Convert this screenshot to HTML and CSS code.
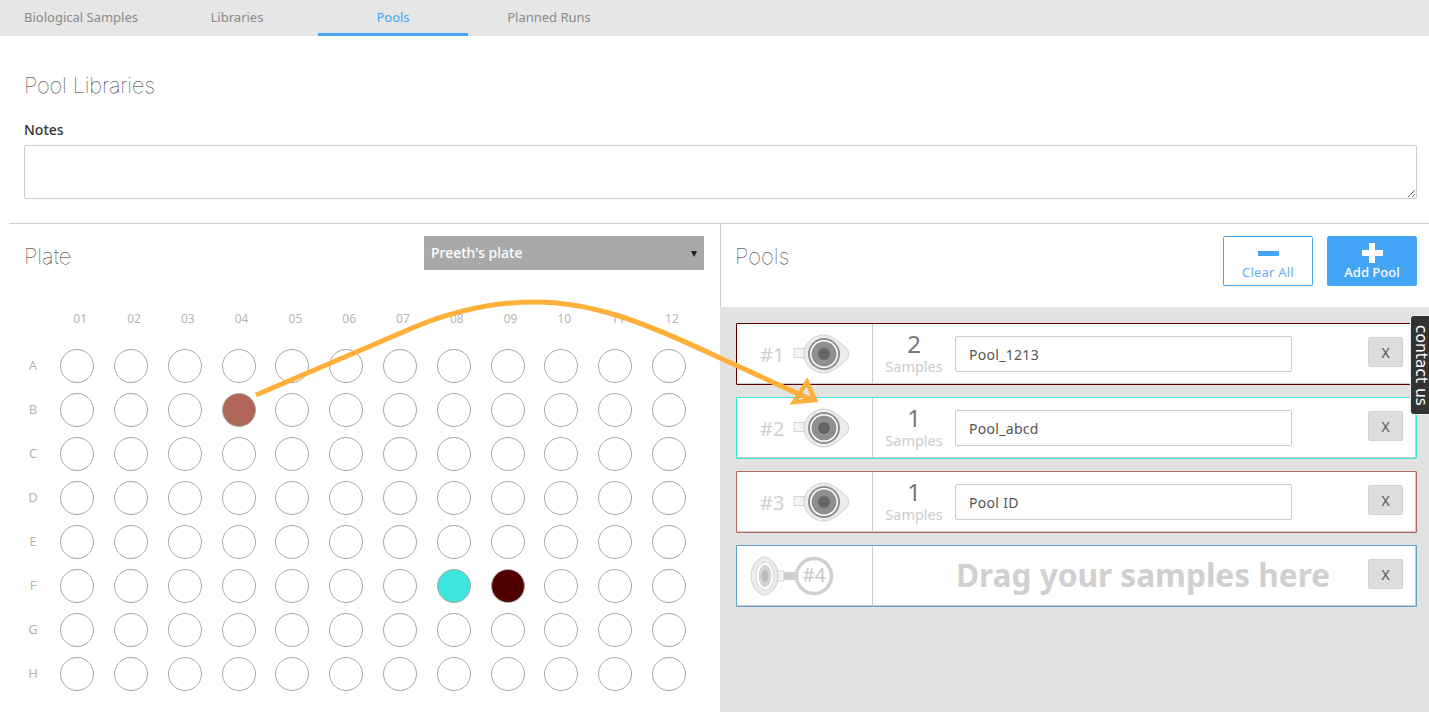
FILE: index.html
```html
<!DOCTYPE html>
<html>
    <head>
        <meta charset="utf-8">
        <title>Pool Libraries</title>
        <link rel="stylesheet" href="styles.css">
    </head>
    <body>
        <svg width="0" height="0" class="defs">
            <symbol id="valve" viewBox="0 0 56 40">
                <path d="M1 14.500h11v9h-11z" fill="#f4f4f4" stroke="#d4d4d4"/>
                <path d="M31 1c-10 0-20 8-20 19s10 19 20 19c8 0 17-8 23-14 2-2.500 2-7.500 0-10-6-6-15-14-23-14z" fill="#ececec" stroke="#d0d0d0"/>
                <circle cx="31" cy="20" r="16" fill="#8d8d8d"/>
                <circle cx="31" cy="20" r="14" fill="#fff"/>
                <circle cx="31" cy="20" r="12.500" fill="#8f8f8f"/>
                <circle cx="31" cy="20" r="6" fill="#666"/>
            </symbol>
        </svg>

        <ul class="tabs">
            <li>Biological Samples</li>
            <li>Libraries</li>
            <li class="active">Pools</li>
            <li>Planned Runs</li>
        </ul>

        <div class="intro">
            <h1>Pool Libraries</h1>
            <label class="notes-label">Notes</label>
            <textarea class="notes"></textarea>
        </div>

        <div class="workspace">
            <div class="plate-pane">
                <div class="pane-head">
                    <h2>Plate</h2>
                    <div class="plate-select">Preeth's plate<span class="caret">▾</span></div>
                </div>
                <div class="plate">
                    <span></span>
                    <span class="col">01</span><span class="col">02</span><span class="col">03</span><span class="col">04</span><span class="col">05</span><span class="col">06</span><span class="col">07</span><span class="col">08</span><span class="col">09</span><span class="col">10</span><span class="col">11</span><span class="col">12</span>

                    <span class="row">A</span>
                    <i></i><i></i><i></i><i></i><i></i><i></i><i></i><i></i><i></i><i></i><i></i><i></i>
                    <span class="row">B</span>
                    <i></i><i></i><i></i><i class="brick"></i><i></i><i></i><i></i><i></i><i></i><i></i><i></i><i></i>
                    <span class="row">C</span>
                    <i></i><i></i><i></i><i></i><i></i><i></i><i></i><i></i><i></i><i></i><i></i><i></i>
                    <span class="row">D</span>
                    <i></i><i></i><i></i><i></i><i></i><i></i><i></i><i></i><i></i><i></i><i></i><i></i>
                    <span class="row">E</span>
                    <i></i><i></i><i></i><i></i><i></i><i></i><i></i><i></i><i></i><i></i><i></i><i></i>
                    <span class="row">F</span>
                    <i></i><i></i><i></i><i></i><i></i><i></i><i></i><i class="aqua"></i><i class="maroon"></i><i></i><i></i><i></i>
                    <span class="row">G</span>
                    <i></i><i></i><i></i><i></i><i></i><i></i><i></i><i></i><i></i><i></i><i></i><i></i>
                    <span class="row">H</span>
                    <i></i><i></i><i></i><i></i><i></i><i></i><i></i><i></i><i></i><i></i><i></i><i></i>
                </div>
            </div>

            <div class="pools-pane">
                <div class="pane-head pools-head">
                    <h2>Pools</h2>
                    <div class="actions">
                        <button class="btn btn-clear"><b class="minus"></b>Clear All</button>
                        <button class="btn btn-add"><b class="plus"></b>Add Pool</button>
                    </div>
                </div>
                <div class="pool-list">
                    <div class="pool pool-1">
                        <div class="pool-id"><span class="num">#1</span><svg class="valve"><use href="#valve"/></svg></div>
                        <div class="count"><strong>2</strong><span>Samples</span></div>
                        <input class="pool-name" value="Pool_1213">
                        <button class="remove">X</button>
                    </div>
                    <div class="pool pool-2">
                        <div class="pool-id"><span class="num">#2</span><svg class="valve"><use href="#valve"/></svg></div>
                        <div class="count"><strong>1</strong><span>Samples</span></div>
                        <input class="pool-name" value="Pool_abcd">
                        <button class="remove">X</button>
                    </div>
                    <div class="pool pool-3">
                        <div class="pool-id"><span class="num">#3</span><svg class="valve"><use href="#valve"/></svg></div>
                        <div class="count"><strong>1</strong><span>Samples</span></div>
                        <input class="pool-name" value="Pool ID">
                        <button class="remove">X</button>
                    </div>
                    <div class="pool pool-4">
                        <div class="pool-id empty">
                            <svg class="valve-empty" viewBox="0 0 86 42" width="86" height="42">
                                <path d="M26 16h8v10h-8z" fill="#f4f4f4" stroke="#d4d4d4"/>
                                <path d="M34 17h12v8h-12z" fill="#cfcfcf"/>
                                <path d="M14 2c-6 0-13 10-13 19s7 19 13 19c8 0 14-9 14-19s-6-19-14-19z" fill="#ececec" stroke="#d0d0d0"/>
                                <ellipse cx="15" cy="21" rx="9" ry="14" fill="#fff" stroke="#d4d4d4"/>
                                <ellipse cx="15" cy="21" rx="6.500" ry="11" fill="#d4d4d4"/>
                                <ellipse cx="15" cy="21" rx="3.500" ry="6" fill="#bdbdbd"/>
                                <circle cx="64" cy="21" r="17.500" fill="#fff" stroke="#cfcfcf" stroke-width="3.500"/>
                                <text x="64" y="27" text-anchor="middle" class="valve-num">#4</text>
                            </svg>
                        </div>
                        <div class="drop">Drag your samples here</div>
                        <button class="remove">X</button>
                    </div>
                </div>
            </div>
        </div>

        <svg class="arrow" width="1429" height="712" viewBox="0 0 1429 712">
            <path d="M256 395L410 329C445 314 490 302 535 302C590 302 640 320 720 358L812 400" fill="none" stroke="#ffb03b" stroke-width="5"/>
            <path d="M807 382L794 402L815 400Z" fill="none" stroke="#ffb03b" stroke-width="4.500"/>
        </svg>

        <div class="contact"><span>contact us</span></div>
    </body>
</html>
```

FILE: styles.css
```css
*{
    margin: 0;
    padding: 0;
    box-sizing: border-box;
}
html,body{
    height: 100%;
    overflow: hidden;
}
body{
    display: flex;
    flex-direction: column;
    background-color: #fff;
    font-family: "Noto Sans", "Open Sans", sans-serif;
    color: #777;
    position: relative;
}
.defs{
    position: absolute;
}

/* tabs */
.tabs{
    list-style: none;
    display: flex;
    gap: 6px;
    height: 36px;
    padding-left: 6px;
    background-color: #e6e6e6;
}
.tabs li{
    width: 150px;
    line-height: 35px;
    text-align: center;
    font-size: 13px;
    color: #8a8a8a;
}
.tabs .active{
    color: #42a5f5;
    border-bottom: 3px solid #42a5f5;
}

/* title and notes */
.intro{
    padding: 34px 12px 24px 24px;
}
h1,h2{
    font-family: Inter, Lato, sans-serif;
    font-weight: 100;
    color: #222;
}
h1{
    font-size: 22px;
    line-height: 30px;
    letter-spacing: -0.2px;
}
.notes-label{
    display: block;
    margin-top: 20px;
    font-size: 14px;
    line-height: 20px;
    font-weight: 500;
    color: #333;
}
.notes{
    display: block;
    width: 100%;
    height: 54px;
    margin-top: 5px;
    border: 1px solid #ccc;
    border-radius: 2px;
}

/* lower part */
.workspace{
    flex: 1;
    display: flex;
    margin-left: 9px;
    border-top: 1px solid #ccc;
}
.plate-pane{
    width: 711px;
}
.pane-head{
    height: 83px;
    padding: 12px 16px 0 15px;
    display: flex;
    justify-content: space-between;
    align-items: flex-start;
}
h2{
    font-size: 22px;
    line-height: 40px;
}
.plate-select{
    width: 280px;
    height: 34px;
    padding: 0 7px;
    display: flex;
    justify-content: space-between;
    background-color: #a9a9a9;
    color: #fff;
    font-size: 14px;
    font-weight: 500;
    line-height: 34px;
}
.caret{
    color: #222;
    font-size: 12px;
}

/* plate */
.plate{
    display: grid;
    grid-template-columns: 26.300px repeat(12, 53.8px);
    row-gap: 10px;
    margin-left: 15px;
    justify-items: center;
    align-items: center;
}
.col{
    font-size: 12px;
    color: #b5b5b5;
    line-height: 20px;
    margin: 2px 0 10px 6px;
}
.row{
    font-size: 13px;
    color: #b5b5b5;
    justify-self: start;
    width: 18px;
    margin-top: -2px;
    text-align: center;
}
.plate i{
    display: block;
    width: 34px;
    height: 34px;
    border: 1px solid #a8a8a8;
    border-radius: 50%;
}
.plate .brick{
    background-color: #b06659;
}
.plate .aqua{
    background-color: #3de6dc;
}
.plate .maroon{
    background-color: #500000;
}

/* pools */
.pools-pane{
    flex: 1;
    display: flex;
    flex-direction: column;
}
.pools-head{
    border-left: 1px solid #ccc;
    padding: 12px 12px 0 14px;
}
.actions{
    display: flex;
    gap: 14px;
}
.btn{
    width: 90px;
    height: 50px;
    border-radius: 2px;
    border: 1px solid #42a5f5;
    font-family: inherit;
    font-size: 13px;
    line-height: 18px;
    display: flex;
    flex-direction: column;
    align-items: center;
    padding-top: 6px;
}
.btn-clear{
    background-color: #fff;
    color: #6aaef5;
    letter-spacing: 0.2px;
}
.btn-add{
    background-color: #42a5f5;
    color: #fff;
    font-weight: 500;
}
.minus,.plus{
    display: block;
    width: 21px;
    height: 20px;
    background: linear-gradient(currentColor,currentColor) center/21px 5px no-repeat;
}
.minus{
    color: #42a5f5;
}
.plus{
    background: linear-gradient(#fff,#fff) center/21px 6px no-repeat, linear-gradient(#fff,#fff) center/6px 20px no-repeat;
}
.pool-list{
    flex: 1;
    background-color: #e2e2e2;
    padding: 16px 12px 0 16px;
    display: flex;
    flex-direction: column;
    gap: 12px;
}
.pool{
    height: 62px;
    display: flex;
    align-items: center;
    background-color: #fff;
    border: 1px solid #999;
    box-shadow: inset -1px -1px 0 #ccc;
    border-radius: 1px;
}
.pool-1{
    border-color: #5c0000;
}
.pool-2{
    border-color: #3de6dc;
}
.pool-3{
    border-color: #b5655a;
}
.pool-4{
    border-color: #5ba3cf;
}
.pool-id{
    width: 136px;
    height: 100%;
    padding-left: 23px;
    display: flex;
    align-items: center;
    gap: 9px;
    border-right: 1px solid #ccc;
    flex-shrink: 0;
}
.pool-id.empty{
    padding-left: 13px;
}
.num{
    font-size: 20px;
    color: #d0d0d0;
}
.valve{
    width: 56px;
    height: 40px;
}
.valve-num{
    font-family: "Noto Sans", sans-serif;
    font-size: 19px;
    fill: #c8c8c8;
}
.count{
    width: 82px;
    margin-top: -2px;
    display: flex;
    flex-direction: column;
    align-items: center;
    flex-shrink: 0;
}
.count strong{
    font-weight: 400;
    font-size: 24px;
    line-height: 24px;
    color: #777;
}
.count span{
    margin-top: 1px;
    font-size: 14.500px;
    line-height: 18px;
    color: #ccc;
}
.pool-name{
    width: 337px;
    height: 36px;
    padding-left: 13px;
    border: 1px solid #ccc;
    border-radius: 2px;
    font-family: inherit;
    font-size: 14px;
    letter-spacing: 0.3px;
    color: #555;
}
.remove{
    width: 35px;
    height: 30px;
    align-self: flex-start;
    margin: 13px 13px 0 auto;
    background-color: #ddd;
    border: 1px solid #d2d2d2;
    border-radius: 2px;
    font-family: inherit;
    font-size: 14px;
    color: #555;
}
.drop{
    flex: 1;
    margin-top: -3px;
    text-align: right;
    padding-right: 38px;
    font-size: 31.600px;
    font-weight: 700;
    color: #d0d0d0;
}
.pool-4 .remove{
    margin-left: 0;
}

/* things lying over the page */
.arrow{
    position: absolute;
    left: 0;
    top: 0;
    pointer-events: none;
}
.contact{
    position: absolute;
    right: 0;
    top: 315px;
    width: 19px;
    height: 100px;
    background-color: #333;
    border: 1px solid #eee;
    border-right: 0;
    border-radius: 4px 0 0 4px;
    display: flex;
    align-items: center;
    justify-content: center;
}
.contact span{
    writing-mode: vertical-rl;
    font-family: "DejaVu Sans", sans-serif;
    font-size: 15.500px;
    line-height: 17px;
    color: #fff;
}
```
